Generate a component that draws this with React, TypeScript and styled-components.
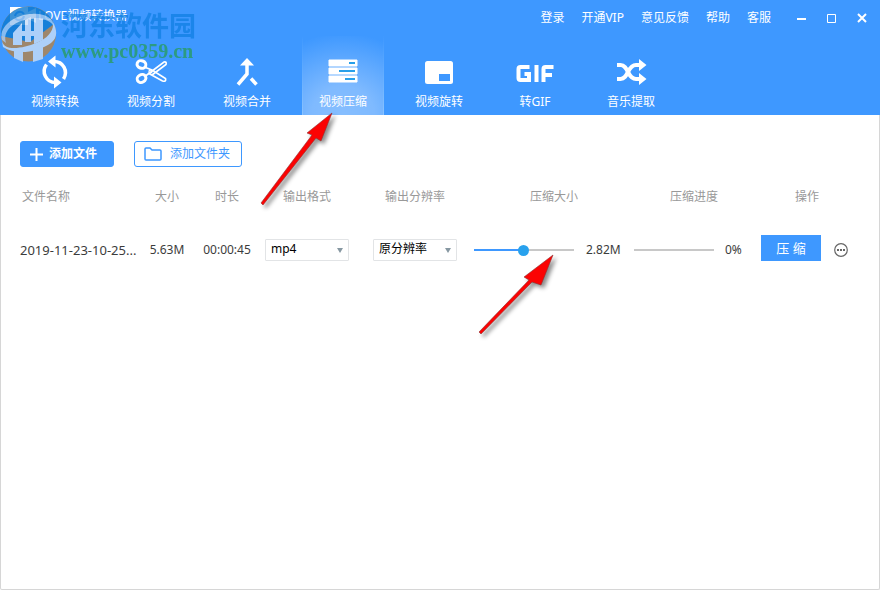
import React, { useState } from "react";
import styled, { createGlobalStyle, css } from "styled-components";

const GlobalStyle = createGlobalStyle`
  * { box-sizing: border-box; }
  html, body, #root { height: 100%; }
  body {
    margin: 0;
    background: #fff;
    color: #3c3c3c;
    font: 12px/16px "Noto Sans", "Noto Sans CJK SC", sans-serif;
  }
  button, select, input { font: inherit; }
`;

const Window = styled.div`
  position: relative;
  display: flex;
  flex-direction: column;
  min-height: 100%;
  border: 1px solid #d6d6d6;
  border-top: 0;
  border-radius: 2px;
`;

const Header = styled.header`
  display: flex;
  flex-direction: column;
  justify-content: space-between;
  height: 115px;
  margin: 0 -1px;
  background: #3e98ff;
  color: #fff;
`;

const TitleBar = styled.div`
  display: flex;
  justify-content: space-between;
  height: 36px;
  padding: 0 10px;
`;

const Brand = styled.div`
  display: flex;
  align-items: center;
  height: 31px;
`;

const TopMenu = styled.nav`
  display: flex;
  align-items: center;
  gap: 17px;
`;

const TopLink = styled.a`
  color: #fff;
  text-decoration: none;
  white-space: nowrap;
`;

const WindowButtons = styled.div`
  display: flex;
  gap: 14px;
  margin-left: 6px;
`;

const plainButton = css`
  display: flex;
  align-items: center;
  justify-content: center;
  padding: 0;
  border: 0;
  background: none;
  color: inherit;
  cursor: pointer;
`;

const WindowButton = styled.button`
  ${plainButton}
  width: 16px;
  height: 16px;
`;

const ToolBar = styled.nav`
  display: flex;
  gap: 14px;
  padding-left: 14px;
`;

const Tool = styled.button<{ $active?: boolean }>`
  ${plainButton}
  flex-direction: column;
  justify-content: flex-start;
  gap: 4px;
  width: 82px;
  height: 79px;
  padding-top: 14px;
  ${(p) =>
    p.$active &&
    css`
      border: 1px solid;
      border-width: 0 1px;
      border-image: linear-gradient(#3e98ff, #8cc4ff) 1;
      background: radial-gradient(ellipse 90px 82px at 50% 100%, #86beff, #7fbaff 35%, #3e98ff);
    `}
`;

const Actions = styled.div`
  display: flex;
  gap: 20px;
  padding: 26px 19px 0;
`;

const AddButton = styled.button<{ $outline?: boolean }>`
  ${plainButton}
  height: 26px;
  gap: ${(p) => (p.$outline ? 8 : 6)}px;
  padding: 0 ${(p) => (p.$outline ? "11px 0 9px" : "16px 0 9px")};
  border: 1px solid #3e98ff;
  border-radius: 3px;
  background: ${(p) => (p.$outline ? "#fff" : "#3e98ff")};
  color: ${(p) => (p.$outline ? "#3e98ff" : "#fff")};
  font-weight: ${(p) => (p.$outline ? 400 : 700)};
  white-space: nowrap;
`;

const TableArea = styled.main`
  padding: 12px 19px;
`;

const FileTable = styled.table`
  width: 100%;
  border-collapse: collapse;
  table-layout: fixed;
`;

const Col = styled.col<{ $width?: number }>`
  width: ${(p) => (p.$width ? `${p.$width}px` : "auto")};
`;

const Head = styled.th<{ $left?: boolean }>`
  height: 36px;
  padding: 0 ${(p) => (p.$left ? "2px" : "0")};
  color: #999;
  font-weight: 400;
  text-align: ${(p) => (p.$left ? "left" : "center")};
`;

const Cell = styled.td<{ $left?: boolean }>`
  height: 70px;
  padding: 0;
  text-align: ${(p) => (p.$left ? "left" : "center")};
  white-space: nowrap;
`;

const FileName = styled.div`
  font-size: 13px;
`;

const Group = styled.div<{ $gap: number; $inset?: number }>`
  display: flex;
  align-items: center;
  gap: ${(p) => p.$gap}px;
  padding-left: ${(p) => p.$inset || 0}px;
`;

const SelectBox = styled.span`
  display: inline-grid;
  align-items: center;
  width: 84px;
  vertical-align: middle;
  > * { grid-area: 1 / 1; }
  > svg { justify-self: end; margin-right: 6px; pointer-events: none; }
`;

const Select = styled.select`
  appearance: none;
  width: 100%;
  height: 22px;
  padding: 0 16px 2px 5px;
  border: 1px solid #e2e4e6;
  border-radius: 1px;
  background: #fff;
  color: #000;
`;

const Slider = styled.input`
  appearance: none;
  width: 100px;
  height: 12px;
  margin: 0;
  background: linear-gradient(to right, #3e98ff 50%, #c8c8c8 50%) center / 100% 2px no-repeat;
  &::-webkit-slider-thumb {
    appearance: none;
    width: 11px;
    height: 11px;
    border-radius: 50%;
    background: #28a1ed;
  }
`;

const Progress = styled.progress`
  appearance: none;
  width: 80px;
  height: 2px;
  border: 0;
  &::-webkit-progress-bar { background: #c8c8c8; }
  &::-webkit-progress-value { background: #3e98ff; }
`;

const CompressButton = styled.button`
  ${plainButton}
  width: 60px;
  height: 26px;
  margin-bottom: 4px;
  background: #3e98ff;
  color: #fff;
  font-size: 13px;
`;

const MoreButton = styled.button`
  ${plainButton}
  color: #666;
`;

const Watermark = styled.div`
  position: absolute;
  left: -1px;
  top: 0;
  display: flex;
  gap: 4px;
  opacity: 0.8;
  pointer-events: none;
`;

const WatermarkText = styled.div`
  display: flex;
  flex-direction: column;
  padding-top: 10px;
`;

const WatermarkName = styled.span`
  color: rgba(10, 125, 225, 0.85);
  font: 700 27px/30px "Noto Sans CJK SC", sans-serif;
`;

const WatermarkUrl = styled.span`
  color: #289c63;
  font: 700 20px/22px "Liberation Serif", serif;
`;

const Arrow = styled.svg<{ $x: number; $y: number }>`
  position: absolute;
  left: ${(p) => p.$x}px;
  top: ${(p) => p.$y}px;
  pointer-events: none;
  filter: drop-shadow(3px 3px 2px rgba(0, 0, 0, 0.45));
`;

const AppMark = () => (
  <svg width="28" height="18" viewBox="0 0 28 18" fill="#fff">
    <path d="M0 0h18v5l8-4v15l-8-4v6H0z" />
    <path d="M5 9a5 5 0 0 1 9-2M14 9a5 5 0 0 1-9 2" fill="none" stroke="#3e98ff" strokeWidth="2" />
  </svg>
);

const WatermarkLogo = () => (
  <svg width="57" height="64" viewBox="0 0 57 64">
    <circle cx="28.5" cy="34" r="27.5" fill="#b78448" />
    <path d="M1 36A27.500 27.500 0 0 1 54 24L30 42z" fill="#0c79d0" />
    <path d="M2 41C4 52 24 48 36 43S54 31 53 22C58 32 57 38 51 43C38 52 16 56 3 47z" fill="#c9def8" />
    <path d="M2 40C-2 26 16 14 32 14C44 13 54 18 54 27C52 20 40 17 30 19C14 21 2 31 6 43z" fill="#c9def8" opacity=".75" />
    <path d="M13 33l9-10v22h-9zM25 20l6-3v25h-6zM34 18h9v22l-9 4zM22 31h12v5H22zM14 50h9v12l-9-4zM33 49l10-3v13l-10 3z" fill="#c9def8" />
  </svg>
);

const ToolIcon = ({ children }: { children: React.ReactNode }) => (
  <svg width="40" height="40" viewBox="0 0 40 40" fill="none" stroke="#fff" strokeWidth="3">
    {children}
  </svg>
);

const tools = [
  {
    name: "视频转换",
    icon: (
      <>
        <path d="M19 11.500C28 11.500 33.500 20.500 28.500 29M11.500 14.500C6 22 11 32.500 20.500 32.500" strokeWidth="3.500" />
        <path d="M20.500 5.500v12l-7.500-6zM19 26.500v12l7.500-6z" fill="#fff" stroke="none" />
      </>
    ),
  },
  {
    name: "视频分割",
    icon: (
      <>
        <ellipse cx="10.500" cy="14.500" rx="4.500" ry="3.700" strokeWidth="3" transform="rotate(20 10.500 14.500)" />
        <ellipse cx="10.500" cy="28.500" rx="4.500" ry="3.800" strokeWidth="3" transform="rotate(-30 10.500 28.500)" />
        <path d="M14.500 17.500 21 20 34.500 28.500Q35.500 32 31.500 31L17 23M14.500 26 33 12Q36 11.500 35 14.500L21 25" strokeWidth="1.700" />
        <circle cx="19.500" cy="21.500" r="1.500" strokeWidth="1.300" />
      </>
    ),
  },
  {
    name: "视频合并",
    icon: (
      <>
        <path d="M20 13v11l-9 10.500M24 28.500l5.500 6" strokeWidth="3.500" />
        <path d="M20 8l7 7.500H13z" fill="#fff" stroke="none" />
      </>
    ),
  },
  {
    name: "视频压缩",
    active: true,
    icon: (
      <>
        <path d="M6 10h28v6H6zM6 18h28v6H6zM6 26h28v6H6z" fill="#fff" stroke="#fff" strokeWidth="1" strokeLinejoin="round" />
        <path d="M26 13h6M16 21h16M22 29h10" stroke="#289fe9" strokeWidth="2" />
      </>
    ),
  },
  {
    name: "视频旋转",
    icon: (
      <>
        <rect x="6" y="11" width="28" height="23" rx="2.500" fill="#fff" stroke="none" />
        <path d="M20 24h11v7H20z" fill="#3e98ff" stroke="none" />
      </>
    ),
  },
  {
    name: "转GIF",
    icon: (
      <path d="M14.500 17H5.500Q3.500 17 3.500 19v9Q3.500 30 5.500 30h8.500V24H9.500M21.500 15v17M28.500 32v-13Q28.500 17 30.500 17H38.500M28 25h9" strokeWidth="4" />
    ),
  },
  {
    name: "音乐提取",
    icon: (
      <>
        <path d="M6 15h3.500c4 0 5.500 3 7.500 7s4 7 8 7H29M6 29h3.500c4 0 5.500-3 7.500-7s4-7 8-7H29" strokeWidth="4" />
        <path d="M28 9l7.500 6L28 21zM28 23l7.500 6-7.500 6z" fill="#fff" stroke="none" />
      </>
    ),
  },
];

const DropArrow = () => (
  <svg width="6" height="5" viewBox="0 0 6 5" fill="#8798a2">
    <path d="M0 0h6L3 5z" />
  </svg>
);

const PointerArrow = ({ x, y, path }: { x: number; y: number; path: string }) => (
  <Arrow $x={x} $y={y} width="90" height="110" viewBox="0 0 90 110" aria-hidden="true">
    <path d={path} fill="#fb0303" stroke="#8d3030" strokeWidth=".6" strokeLinejoin="round" />
  </Arrow>
);

export default function App() {
  const [size, setSize] = useState(49);
  return (
    <>
      <GlobalStyle />
      <Window>
        <Header>
          <TitleBar>
            <Brand>
              <AppMark />
              LOVE视频转换器
            </Brand>
            <TopMenu>
              {["登录", "开通VIP", "意见反馈", "帮助", "客服"].map((label) => (
                <TopLink href="#" key={label}>{label}</TopLink>
              ))}
              <WindowButtons>
                <WindowButton aria-label="最小化">
                  <svg width="10" height="10"><path d="M0 6h9" stroke="#fff" strokeWidth="2" /></svg>
                </WindowButton>
                <WindowButton aria-label="最大化">
                  <svg width="10" height="10"><path d="M.5 1.500h8v8h-8z" fill="none" stroke="#fff" /></svg>
                </WindowButton>
                <WindowButton aria-label="关闭">
                  <svg width="10" height="10"><path d="M1 1l8 8M9 1L1 9" stroke="#fff" strokeWidth="2" /></svg>
                </WindowButton>
              </WindowButtons>
            </TopMenu>
          </TitleBar>
          <ToolBar>
            {tools.map((tool) => (
              <Tool key={tool.name} $active={tool.active}>
                <ToolIcon>{tool.icon}</ToolIcon>
                {tool.name}
              </Tool>
            ))}
          </ToolBar>
        </Header>

        <Actions>
          <AddButton>
            <svg width="13" height="13"><path d="M6.500 0v13M0 6.500h13" stroke="#fff" strokeWidth="2" /></svg>
            添加文件
          </AddButton>
          <AddButton $outline>
            <svg width="18" height="14" fill="none" stroke="#3e98ff" strokeWidth="1.500">
              <path d="M1 2q0-1 1-1h4l2 2h8q1 0 1 1v8q0 1-1 1H2q-1 0-1-1z" />
            </svg>
            添加文件夹
          </AddButton>
        </Actions>

        <TableArea>
          <FileTable>
            <colgroup>
              <Col />
              <Col $width={58} />
              <Col $width={62} />
              <Col $width={98} />
              <Col $width={118} />
              <Col $width={160} />
              <Col $width={120} />
              <Col $width={106} />
            </colgroup>
            <thead>
              <tr>
                <Head $left>文件名称</Head>
                <Head>大小</Head>
                <Head>时长</Head>
                <Head>输出格式</Head>
                <Head>输出分辨率</Head>
                <Head>压缩大小</Head>
                <Head>压缩进度</Head>
                <Head>操作</Head>
              </tr>
            </thead>
            <tbody>
              <tr>
                <Cell $left><FileName>2019-11-23-10-25...</FileName></Cell>
                <Cell>5.63M</Cell>
                <Cell>00:00:45</Cell>
                <Cell>
                  <SelectBox>
                    <Select aria-label="输出格式"><option>mp4</option></Select>
                    <DropArrow />
                  </SelectBox>
                </Cell>
                <Cell>
                  <SelectBox>
                    <Select aria-label="输出分辨率"><option>原分辨率</option></Select>
                    <DropArrow />
                  </SelectBox>
                </Cell>
                <Cell>
                  <Group $gap={12}>
                    <Slider type="range" aria-label="压缩大小" value={size} onChange={(e) => setSize(Number(e.target.value))} />
                    2.82M
                  </Group>
                </Cell>
                <Cell>
                  <Group $gap={11}>
                    <Progress aria-label="压缩进度" value={0} max={100} />
                    0%
                  </Group>
                </Cell>
                <Cell>
                  <Group $gap={13} $inset={7}>
                    <CompressButton>压 缩</CompressButton>
                    <MoreButton aria-label="更多">
                      <svg width="14" height="14" fill="none" stroke="currentColor">
                        <circle cx="7" cy="7" r="6.300" strokeWidth="1.200" />
                        <path d="M3 7h2M6 7h2M9 7h2" strokeWidth="2" />
                      </svg>
                    </MoreButton>
                  </Group>
                </Cell>
              </tr>
            </tbody>
          </FileTable>
        </TableArea>

        <Watermark aria-hidden="true">
          <WatermarkLogo />
          <WatermarkText>
            <WatermarkName>河东软件园</WatermarkName>
            <WatermarkUrl>www.pc0359.cn</WatermarkUrl>
          </WatermarkText>
        </Watermark>
        <PointerArrow x={254} y={110} path="M6 93L57 25 52 23 77 3 66 31 61 28 8 95z" />
        <PointerArrow x={472} y={250} path="M6 82L56 30 51 27 80 5 68 35 59 32 8 84z" />
      </Window>
    </>
  );
}
